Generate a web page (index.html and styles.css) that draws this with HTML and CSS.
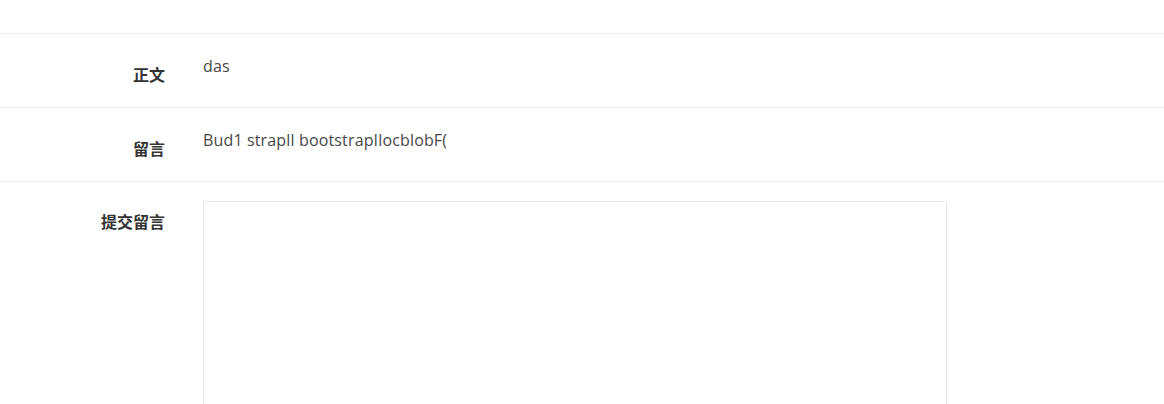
FILE: index.html
```html
<!DOCTYPE html>
<html lang="zh-CN">
<head>
<meta charset="utf-8">
<title>留言</title>
<link rel="stylesheet" href="styles.css">
</head>
<body>
<div class="form">
  <div class="top"></div>
  <div class="row">
    <div class="label">正文</div>
    <div class="value">das</div>
  </div>
  <div class="row">
    <div class="label">留言</div>
    <div class="value">Bud1 strapll bootstrapIlocblobF(</div>
  </div>
  <div class="row row-last">
    <div class="label">提交留言</div>
    <div class="value"><textarea class="box"></textarea></div>
  </div>
</div>
</body>
</html>
```

FILE: styles.css
```css
html, body {
  margin: 0;
  padding: 0;
  background: #fff;
}
body {
  font-family: "Open Sans", "Noto Sans CJK SC", sans-serif;
  font-size: 16px;
  color: #474747;
  overflow: hidden;
}
.top {
  height: 33px;
  border-bottom: 1px solid #eeeeee;
}
.row {
  display: grid;
  grid-template-columns: 165px 1fr;
  column-gap: 38px;
  padding: 20px 0 21px;
  border-bottom: 1px solid #eeeeee;
}
.label {
  text-align: right;
  font-family: "Noto Sans CJK SC", sans-serif;
  font-weight: bold;
  color: #333;
  line-height: 24px;
  padding-top: 8px;
}
.value {
  line-height: 24px;
  letter-spacing: 0.15px;
}
.row-last {
  padding-top: 19px;
  border-bottom: none;
}
.box {
  display: block;
  width: 744px;
  height: 260px;
  box-sizing: border-box;
  margin: 0;
  border: 1px solid #e8e8e8;
  border-radius: 2px;
  resize: none;
  outline: none;
  background: #fff;
}
```
